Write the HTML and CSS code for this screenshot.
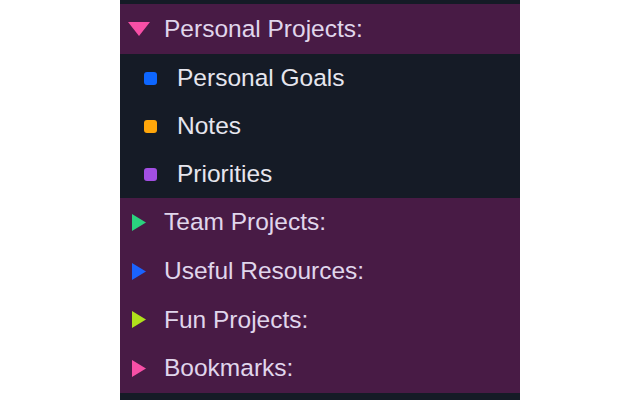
FILE: index.html
```html
<!DOCTYPE html>
<html>
<head>
<meta charset="utf-8">
<link rel="stylesheet" href="styles.css">
</head>
<body>
<div class="page">
  <div class="panel">
    <div class="row group open">
      <svg class="tri-down" width="22" height="14" viewBox="0 0 22 14"><polygon points="0,0 22,0 11,14" fill="#f74fa6"/></svg>
      <span class="label">Personal Projects:</span>
    </div>
    <div class="items">
      <div class="row item"><span class="dot blue"></span><span class="label">Personal Goals</span></div>
      <div class="row item"><span class="dot orange"></span><span class="label">Notes</span></div>
      <div class="row item"><span class="dot purple"></span><span class="label">Priorities</span></div>
    </div>
    <div class="groups">
      <div class="row group"><svg class="tri" width="14" height="17" viewBox="0 0 14 17"><polygon points="0,0 14,8.5 0,17" fill="#2ad27e"/></svg><span class="label">Team Projects:</span></div>
      <div class="row group"><svg class="tri" width="14" height="17" viewBox="0 0 14 17"><polygon points="0,0 14,8.5 0,17" fill="#1b63ff"/></svg><span class="label">Useful Resources:</span></div>
      <div class="row group"><svg class="tri" width="14" height="17" viewBox="0 0 14 17"><polygon points="0,0 14,8.5 0,17" fill="#b0e01c"/></svg><span class="label">Fun Projects:</span></div>
      <div class="row group"><svg class="tri" width="14" height="17" viewBox="0 0 14 17"><polygon points="0,0 14,8.5 0,17" fill="#f74fa6"/></svg><span class="label">Bookmarks:</span></div>
    </div>
  </div>
</div>
</body>
</html>
```
FILE: styles.css
```css
html, body {
  margin: 0;
  padding: 0;
  background: #ffffff;
}
.page {
  width: 640px;
  height: 400px;
  display: flex;
  justify-content: center;
}
.panel {
  width: 400px;
  height: 400px;
  background: #151b26;
  padding-top: 4px;
  box-sizing: border-box;
  font-family: "Liberation Sans", Arial, sans-serif;
  font-size: 24.5px;
}
.row {
  display: flex;
  align-items: center;
  box-sizing: border-box;
}
.group {
  background: #481b45;
  color: #e0d6ec;
  height: 48.75px;
}
.group.open {
  height: 50px;
  padding-left: 8px;
}
.group .tri {
  flex-shrink: 0;
  margin-left: 12px;
  margin-right: 18px;
}
.tri-down {
  flex-shrink: 0;
  margin-right: 14px;
}
.items {
  background: #151b26;
}
.item {
  height: 48px;
  color: #e6e6ee;
  padding-left: 24px;
}
.dot {
  flex-shrink: 0;
  width: 13px;
  height: 13px;
  border-radius: 3px;
  margin-right: 20px;
}
.dot.blue { background: #0d66ff; }
.dot.orange { background: #ffa60a; }
.dot.purple { background: #a24fe3; }
.label {
  line-height: 1;
  white-space: nowrap;
}
```
